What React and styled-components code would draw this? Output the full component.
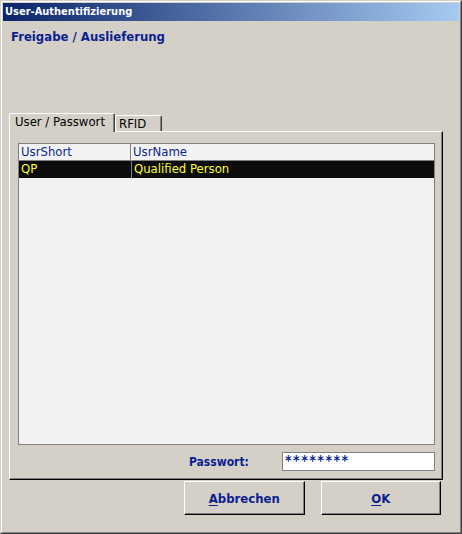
import React, { useState } from "react";
import styled, { createGlobalStyle } from "styled-components";

const GlobalStyle = createGlobalStyle`
  html, body {
    margin: 0;
    padding: 0;
    background: #d4d0c8;
  }
`;

const Window = styled.div`
  width: 462px;
  height: 534px;
  box-sizing: border-box;
  background: #d4d0c8;
  border-top: 1px solid #d4d0c8;
  border-left: 1px solid #d4d0c8;
  border-right: 1px solid #404040;
  border-bottom: 1px solid #404040;
  font-family: "DejaVu Sans Condensed", "DejaVu Sans", sans-serif;
  display: flex;
  flex-direction: column;
`;

const Frame = styled.div`
  flex: 1;
  display: flex;
  flex-direction: column;
  border-top: 1px solid #ffffff;
  border-left: 1px solid #ffffff;
  border-right: 1px solid #808080;
  border-bottom: 1px solid #808080;
  padding: 1px;
`;

const TitleBar = styled.div`
  height: 18px;
  background: linear-gradient(to right, #0a246a, #a6caf0);
  color: #ffffff;
  font-weight: bold;
  font-size: 11px;
  line-height: 18px;
  padding-left: 2px;
`;

const Body = styled.div`
  flex: 1;
  display: flex;
  flex-direction: column;
  padding: 0 18px 0 6px;
`;

const Heading = styled.div`
  color: #0a1f8f;
  font-weight: bold;
  font-size: 13px;
  margin: 8px 0 0 2px;
  height: 83px;
`;

const Tabs = styled.div`
  display: flex;
  align-items: flex-end;
  height: 19px;
  position: relative;
  z-index: 1;
`;

const Tab = styled.div`
  box-sizing: border-box;
  height: ${(p) => (p.$active ? "19px" : "16px")};
  margin-bottom: ${(p) => (p.$active ? "-1px" : "0")};
  padding: ${(p) => (p.$active ? "0 5px" : "0 3px")};
  background: #d4d0c8;
  border-top: 1px solid #ffffff;
  border-left: 1px solid #ffffff;
  border-right: 1px solid #404040;
  box-shadow: inset -1px 0 0 #808080;
  border-radius: 2px 2px 0 0;
  font-size: 13px;
  line-height: 16px;
  color: #000000;
  width: ${(p) => p.$width}px;
  white-space: nowrap;
`;

const Panel = styled.div`
  box-sizing: border-box;
  width: 434px;
  height: 349px;
  border-top: 1px solid #ffffff;
  border-left: 1px solid #ffffff;
  border-right: 1px solid #000000;
  border-bottom: 1px solid #000000;
  box-shadow: inset -1px -1px 0 #808080;
  padding: 11px 7px 0 8px;
  display: flex;
  flex-direction: column;
`;

const ListBox = styled.div`
  box-sizing: border-box;
  height: 302px;
  border: 1px solid #808080;
  background: #f2f2f2;
  font-size: 13px;
`;

const Row = styled.div`
  display: grid;
  grid-template-columns: 112px 1fr;
  height: 17px;
  line-height: 16px;
  background: ${(p) => (p.$selected ? "#0c0c0c" : "transparent")};
  color: ${(p) => (p.$selected ? "#ffff33" : "#0a1f8f")};
  cursor: default;
`;

const HeadCell = styled.div`
  padding-left: 2px;
  border-right: 1px solid #808080;
  border-bottom: 1px solid #808080;
  &:last-child {
    border-right: none;
  }
`;

const Cell = styled.div`
  padding-left: 2px;
  border-left: ${(p) => (p.$divider ? "1px solid #808080" : "none")};
`;

const PasswordRow = styled.div`
  display: flex;
  align-items: center;
  margin-top: 7px;
  padding-left: 171px;
`;

const Label = styled.label`
  color: #0a1f8f;
  font-weight: bold;
  font-size: 12px;
  width: 93px;
`;

const PwInput = styled.input`
  box-sizing: border-box;
  width: 153px;
  height: 19px;
  border: 1px solid #808080;
  background: #ffffff;
  color: #0a1f8f;
  font-family: "DejaVu Sans Condensed", "DejaVu Sans", sans-serif;
  font-weight: bold;
  font-size: 14px;
  letter-spacing: 1.5px;
  padding: 0 2px 4px;
  outline: none;
`;

const Buttons = styled.div`
  display: flex;
  gap: 16px;
  padding-left: 175px;
  margin-top: 1px;
`;

const Button = styled.button`
  box-sizing: border-box;
  width: 121px;
  height: 34px;
  background: #d4d0c8;
  border-top: 1px solid #ffffff;
  border-left: 1px solid #ffffff;
  border-right: 1px solid #000000;
  border-bottom: 1px solid #000000;
  box-shadow: inset -1px -1px 0 #808080;
  color: #0a1f8f;
  font-family: "DejaVu Sans Condensed", "DejaVu Sans", sans-serif;
  font-weight: bold;
  font-size: 13px;
  padding: 0;
  u {
    text-decoration-thickness: 1px;
    text-underline-offset: 2px;
  }
`;

const users = [{ short: "QP", name: "Qualified Person" }];

export default function App() {
  const [tab, setTab] = useState("user");
  const [pw, setPw] = useState("********");

  return (
    <>
      <GlobalStyle />
      <Window>
        <Frame>
          <TitleBar>User-Authentifizierung</TitleBar>
          <Body>
            <Heading>Freigabe / Auslieferung</Heading>
            <Tabs>
              <Tab $active={tab === "user"} $width={106} onClick={() => setTab("user")}>
                User / Passwort
              </Tab>
              <Tab $active={tab === "rfid"} $width={47} onClick={() => setTab("rfid")}>
                RFID
              </Tab>
            </Tabs>
            <Panel>
              <ListBox>
                <Row>
                  <HeadCell>UsrShort</HeadCell>
                  <HeadCell>UsrName</HeadCell>
                </Row>
                {users.map((u) => (
                  <Row key={u.short} $selected>
                    <Cell>{u.short}</Cell>
                    <Cell $divider>{u.name}</Cell>
                  </Row>
                ))}
              </ListBox>
              <PasswordRow>
                <Label htmlFor="pw">Passwort:</Label>
                <PwInput id="pw" value={pw} onChange={(e) => setPw(e.target.value)} />
              </PasswordRow>
            </Panel>
            <Buttons>
              <Button>
                <u>A</u>bbrechen
              </Button>
              <Button>
                <u>O</u>K
              </Button>
            </Buttons>
          </Body>
        </Frame>
      </Window>
    </>
  );
}
